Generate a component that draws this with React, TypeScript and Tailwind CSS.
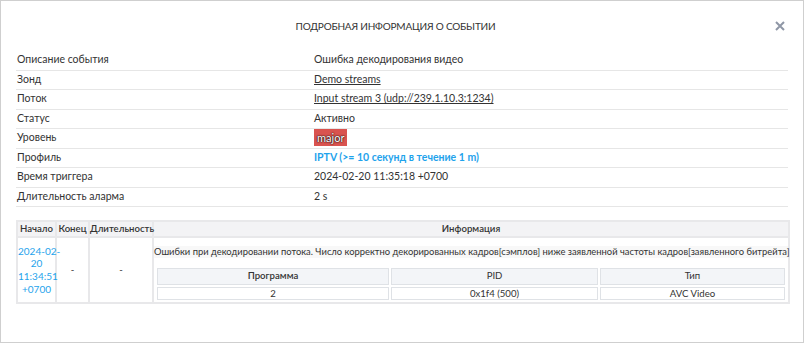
export default function App() {
  const rows: { label: string; value: React.ReactNode }[] = [
    { label: "Описание события", value: "Ошибка декодирования видео" },
    { label: "Зонд", value: <span className="underline">Demo streams</span> },
    { label: "Поток", value: <span className="underline">Input stream 3 (udp://239.1.10.3:1234)</span> },
    { label: "Статус", value: "Активно" },
    {
      label: "Уровень",
      value: (
        <span className="inline-block bg-[#d9534f] px-[3px] text-[11px] leading-[17px] text-white [text-shadow:0_0_2px_#000,0_0_1px_#000]">
          major
        </span>
      ),
    },
    { label: "Профиль", value: <span className="font-bold text-[#1fa3ec]">IPTV (&gt;= 10 секунд в течение 1 m)</span> },
    { label: "Время триггера", value: "2024-02-20 11:35:18 +0700" },
    { label: "Длительность аларма", value: "2 s" },
  ]

  return (
    <div className="h-[343px] w-[804px] border border-[#cfcfcf] bg-white font-['Lato',sans-serif] text-[10.5px] text-[#333]">
      <div className="relative flex h-[50px] items-center justify-center">
        <h1 className="mr-[13px] text-[10px] uppercase tracking-[-0.2px] text-[#333]">Подробная информация о событии</h1>
        <button className="absolute right-[18px] top-[20px] text-[#8f97a6]">
          <svg width="10" height="10" viewBox="0 0 10 10">
            <path d="M1 1 L9 9 M9 1 L1 9" stroke="currentColor" strokeWidth="2" />
          </svg>
        </button>
      </div>

      <div className="mx-[15px]">
        {rows.map((r) => (
          <div key={r.label} className="flex h-[19.5px] items-center border-b border-[#e6e6e6]">
            <div className="w-[298px] pl-px text-[#333]">{r.label}</div>
            <div className="flex-1">{r.value}</div>
          </div>
        ))}
      </div>

      <table className="mx-[15px] mt-[13px] w-[774px] table-fixed border-collapse border-2 border-[#e8e8ea] text-center text-[9.6px]">
        <thead>
          <tr className="h-[15px] bg-[#f3f3f5]">
            <th className="w-[39px] border-2 border-[#e8e8ea] p-0 font-semibold">Начало</th>
            <th className="w-[33px] border-2 border-[#e8e8ea] p-0 font-semibold">Конец</th>
            <th className="w-[64px] border-2 border-[#e8e8ea] p-0 font-semibold">Длительность</th>
            <th className="border-2 border-[#e8e8ea] font-semibold">Информация</th>
          </tr>
        </thead>
        <tbody>
          <tr>
            <td className="whitespace-nowrap border-2 border-[#e8e8ea] px-0 py-0 text-[10px] leading-[12.7px] text-[#1fa3ec]">
              2024-02-
              <br />
              20
              <br />
              11:34:51
              <br />
              +0700
            </td>
            <td className="border-2 border-[#e8e8ea]">-</td>
            <td className="border-2 border-[#e8e8ea]">-</td>
            <td className="border-2 border-[#e8e8ea] p-0 text-left align-top">
              <div className="mt-[8px] h-[12px] bg-[#f8f8f8] text-[9.4px] leading-[12px] whitespace-nowrap">
                Ошибки при декодировании потока. Число корректно декорированных кадров[сэмплов] ниже заявленной частоты кадров[заявленного битрейта]
              </div>
              <table className="mx-[1px] mt-[8px] w-[calc(100%-2px)] table-fixed border-separate border-spacing-[2px] text-center">
                <thead>
                  <tr className="bg-[#f3f5f8]">
                    <th className="h-[16px] w-[232px] border border-[#dfe2e6] p-0 font-semibold">Программа</th>
                    <th className="w-[207px] border border-[#dfe2e6] p-0 font-normal">PID</th>
                    <th className="border border-[#dfe2e6] p-0 font-normal">Тип</th>
                  </tr>
                </thead>
                <tbody>
                  <tr>
                    <td className="h-[13px] border border-[#dfe2e6] p-0 leading-[11px]">2</td>
                    <td className="border border-[#dfe2e6] p-0 leading-[11px]">0x1f4 (500)</td>
                    <td className="border border-[#dfe2e6] p-0 leading-[11px]">AVC Video</td>
                  </tr>
                </tbody>
              </table>
            </td>
          </tr>
        </tbody>
      </table>
    </div>
  )
}
